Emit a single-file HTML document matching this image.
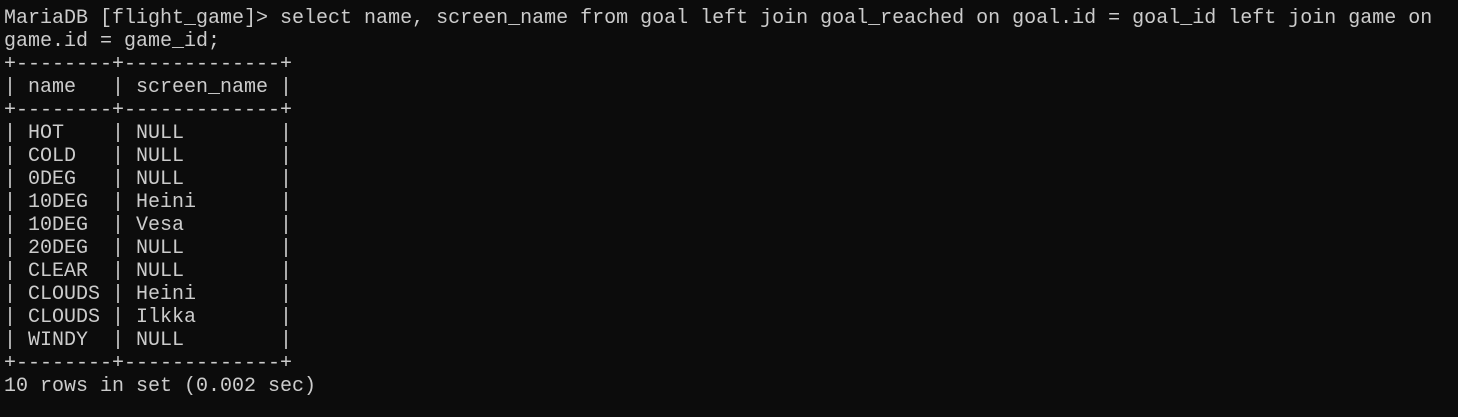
<!DOCTYPE html>
<html><head><meta charset="utf-8"><style>
html,body{margin:0;padding:0;background:#0c0c0c;width:1458px;height:417px;overflow:hidden}
pre{margin:0;position:absolute;left:4px;top:7px;font-family:"Liberation Mono",monospace;font-size:20px;line-height:23px;color:#cccccc;letter-spacing:0}
</style></head><body><pre>MariaDB [flight_game]&gt; select name, screen_name from goal left join goal_reached on goal.id = goal_id left join game on
game.id = game_id;
+--------+-------------+
| name   | screen_name |
+--------+-------------+
| HOT    | NULL        |
| COLD   | NULL        |
| 0DEG   | NULL        |
| 10DEG  | Heini       |
| 10DEG  | Vesa        |
| 20DEG  | NULL        |
| CLEAR  | NULL        |
| CLOUDS | Heini       |
| CLOUDS | Ilkka       |
| WINDY  | NULL        |
+--------+-------------+
10 rows in set (0.002 sec)</pre></body></html>
